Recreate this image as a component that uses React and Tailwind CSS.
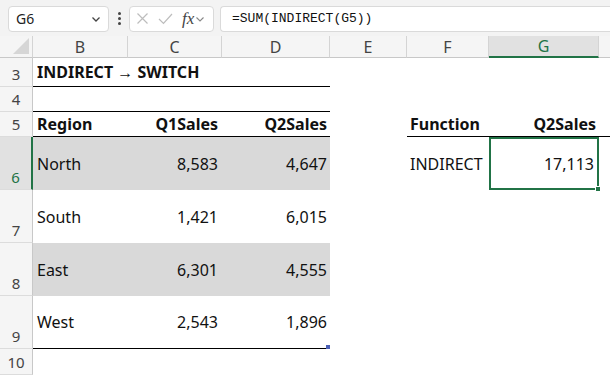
import React from 'react';

const cols = ['B', 'C', 'D', 'E', 'F', 'G'];

const data = [
  { row: 6, region: 'North', q1: '8,583', q2: '4,647', shade: true },
  { row: 7, region: 'South', q1: '1,421', q2: '6,015', shade: false },
  { row: 8, region: 'East', q1: '6,301', q2: '4,555', shade: true },
  { row: 9, region: 'West', q1: '2,543', q2: '1,896', shade: false },
];

const RowHead = ({ n, active }) => (
  <div
    className={`flex items-end justify-center pb-[1px] border-b border-[#dcdcdc] text-[15px] ${
      active ? 'bg-[#e1e1e1] text-[#217346] border-r-2 border-r-[#217346]' : 'bg-[#f5f5f5] text-[#444] border-r border-r-[#c8c8c8]'
    }`}
  >
    {n}
  </div>
);

export default function App() {
  return (
    <div className="w-[610px] h-[375px] overflow-hidden bg-white font-['Noto_Sans','Open_Sans',sans-serif] text-[#111]">
      {/* formula bar */}
      <div className="h-[36px] bg-[#f3f3f3] flex items-center gap-[6px] pl-[8px] pt-[1px]">
        <div className="w-[101px] h-[26px] bg-white border border-[#dadada] rounded-[4px] flex items-center justify-between pl-[7px] pr-[6px] text-[14px] text-[#222]">
          <span>G6</span>
          <svg width="12" height="12" viewBox="0 0 12 12" fill="none" stroke="#444" strokeWidth="1.3">
            <path d="M2.5 4.5 L6 8 L9.5 4.5" />
          </svg>
        </div>
        <div className="w-[8px] flex flex-col items-center gap-[2px]">
          <span className="w-[3px] h-[3px] rounded-full bg-[#444]" />
          <span className="w-[3px] h-[3px] rounded-full bg-[#444]" />
          <span className="w-[3px] h-[3px] rounded-full bg-[#444]" />
        </div>
        <div className="w-[85px] h-[26px] bg-white border border-[#dadada] rounded-[4px] flex items-center pl-[6px] gap-[9px]">
          <svg width="13" height="13" viewBox="0 0 13 13" stroke="#bdbdbd" strokeWidth="1.2">
            <path d="M1.5 1.5 L11.5 11.5 M11.5 1.5 L1.5 11.5" />
          </svg>
          <svg width="15" height="13" viewBox="0 0 15 13" fill="none" stroke="#bdbdbd" strokeWidth="1.2">
            <path d="M1 7 L5.5 11.5 L14 2" />
          </svg>
          <span className="flex items-center">
            <span className="font-['Liberation_Serif',serif] italic text-[17px] text-[#444] leading-none">fx</span>
            <svg width="10" height="10" viewBox="0 0 10 10" fill="none" stroke="#888" strokeWidth="1.1" className="ml-[1px]">
              <path d="M1.5 3.5 L5 7 L8.5 3.5" />
            </svg>
          </span>
        </div>
        <div className="flex-1 h-[26px] bg-white border border-[#dadada] border-r-0 rounded-l-[4px] flex items-center pl-[11px] font-['Liberation_Mono',monospace] text-[13px] text-[#111]">
          =SUM(INDIRECT(G5))
        </div>
      </div>

      {/* sheet */}
      <div className="grid grid-cols-[33px_95px_94px_108px_77px_82px_110px_11px] grid-rows-[22px_29px_25px_25px_53px_53px_53px_53px_26px]">
        {/* column headers */}
        <div className="bg-[#f5f5f5] border-b border-[#c8c8c8] border-r border-r-[#d4d4d4] relative">
          <div className="absolute right-[3px] bottom-[3px] w-0 h-0 border-l-[16px] border-l-transparent border-b-[16px] border-b-[#d6d6d6]" />
        </div>
        {cols.map((c) => (
          <div
            key={c}
            className={`flex items-center justify-center text-[16px] border-r border-r-[#d4d4d4] ${
              c === 'G'
                ? 'bg-[#e1e1e1] text-[#217346] border-b-2 border-b-[#217346]'
                : 'bg-[#f5f5f5] text-[#444] border-b border-b-[#c8c8c8]'
            }`}
          >
            {c}
          </div>
        ))}
        <div className="bg-[#f5f5f5] border-b border-[#c8c8c8]" />

        {/* row 3 */}
        <RowHead n={3} />
        <div className="col-span-3 border-b border-black flex items-center pl-[4px] font-bold text-[16px] whitespace-nowrap">
          INDIRECT → SWITCH
        </div>
        <div className="col-span-4" />

        {/* row 4 */}
        <RowHead n={4} />
        <div className="col-span-3 border-b border-black" />
        <div className="col-span-4" />

        {/* row 5 */}
        <RowHead n={5} />
        <div className="border-b border-black flex items-end pl-[4px] font-bold text-[16px]">Region</div>
        <div className="border-b border-black flex items-end justify-end pr-[4px] font-bold text-[16px]">Q1Sales</div>
        <div className="border-b border-black flex items-end justify-end pr-[3px] font-bold text-[16px]">Q2Sales</div>
        <div />
        <div className="border-b border-black flex items-end pl-[3px] font-bold text-[16px]">Function</div>
        <div className="border-b border-black flex items-end justify-end pr-[3px] font-bold text-[16px]">Q2Sales</div>
        <div className="border-b border-black" />

        {data.map((d) => (
          <React.Fragment key={d.row}>
            <RowHead n={d.row} active={d.row === 6} />
            <div
              className={`flex items-center pl-[4px] text-[16px] ${d.shade ? 'bg-[#d9d9d9]' : ''} ${
                d.row === 9 ? 'border-b border-black' : ''
              }`}
            >
              {d.region}
            </div>
            <div
              className={`flex items-center justify-end pr-[4px] text-[16px] ${d.shade ? 'bg-[#d9d9d9]' : ''} ${
                d.row === 9 ? 'border-b border-black' : ''
              }`}
            >
              {d.q1}
            </div>
            <div
              className={`relative flex items-center justify-end pr-[3px] text-[16px] ${d.shade ? 'bg-[#d9d9d9]' : ''} ${
                d.row === 9 ? 'border-b border-black' : ''
              }`}
            >
              {d.q2}
              {d.row === 9 && (
                <span className="absolute right-0 bottom-[-1px] w-[4px] h-[4px] bg-[#4a5fb5]" />
              )}
            </div>
            <div />
            {d.row === 6 ? (
              <>
                <div className="flex items-center pl-[3px] text-[16px]">INDIRECT</div>
                <div className="relative flex items-center justify-end pr-[3px] text-[16px] border-2 border-[#217346]">
                  17,113
                  <span className="absolute right-[-4px] bottom-[-4px] w-[6px] h-[6px] bg-[#217346] border border-white" />
                </div>
              </>
            ) : (
              <>
                <div />
                <div />
              </>
            )}
            <div />
          </React.Fragment>
        ))}

        {/* row 10 */}
        <RowHead n={10} />
        <div className="col-span-7" />
      </div>
    </div>
  );
}
